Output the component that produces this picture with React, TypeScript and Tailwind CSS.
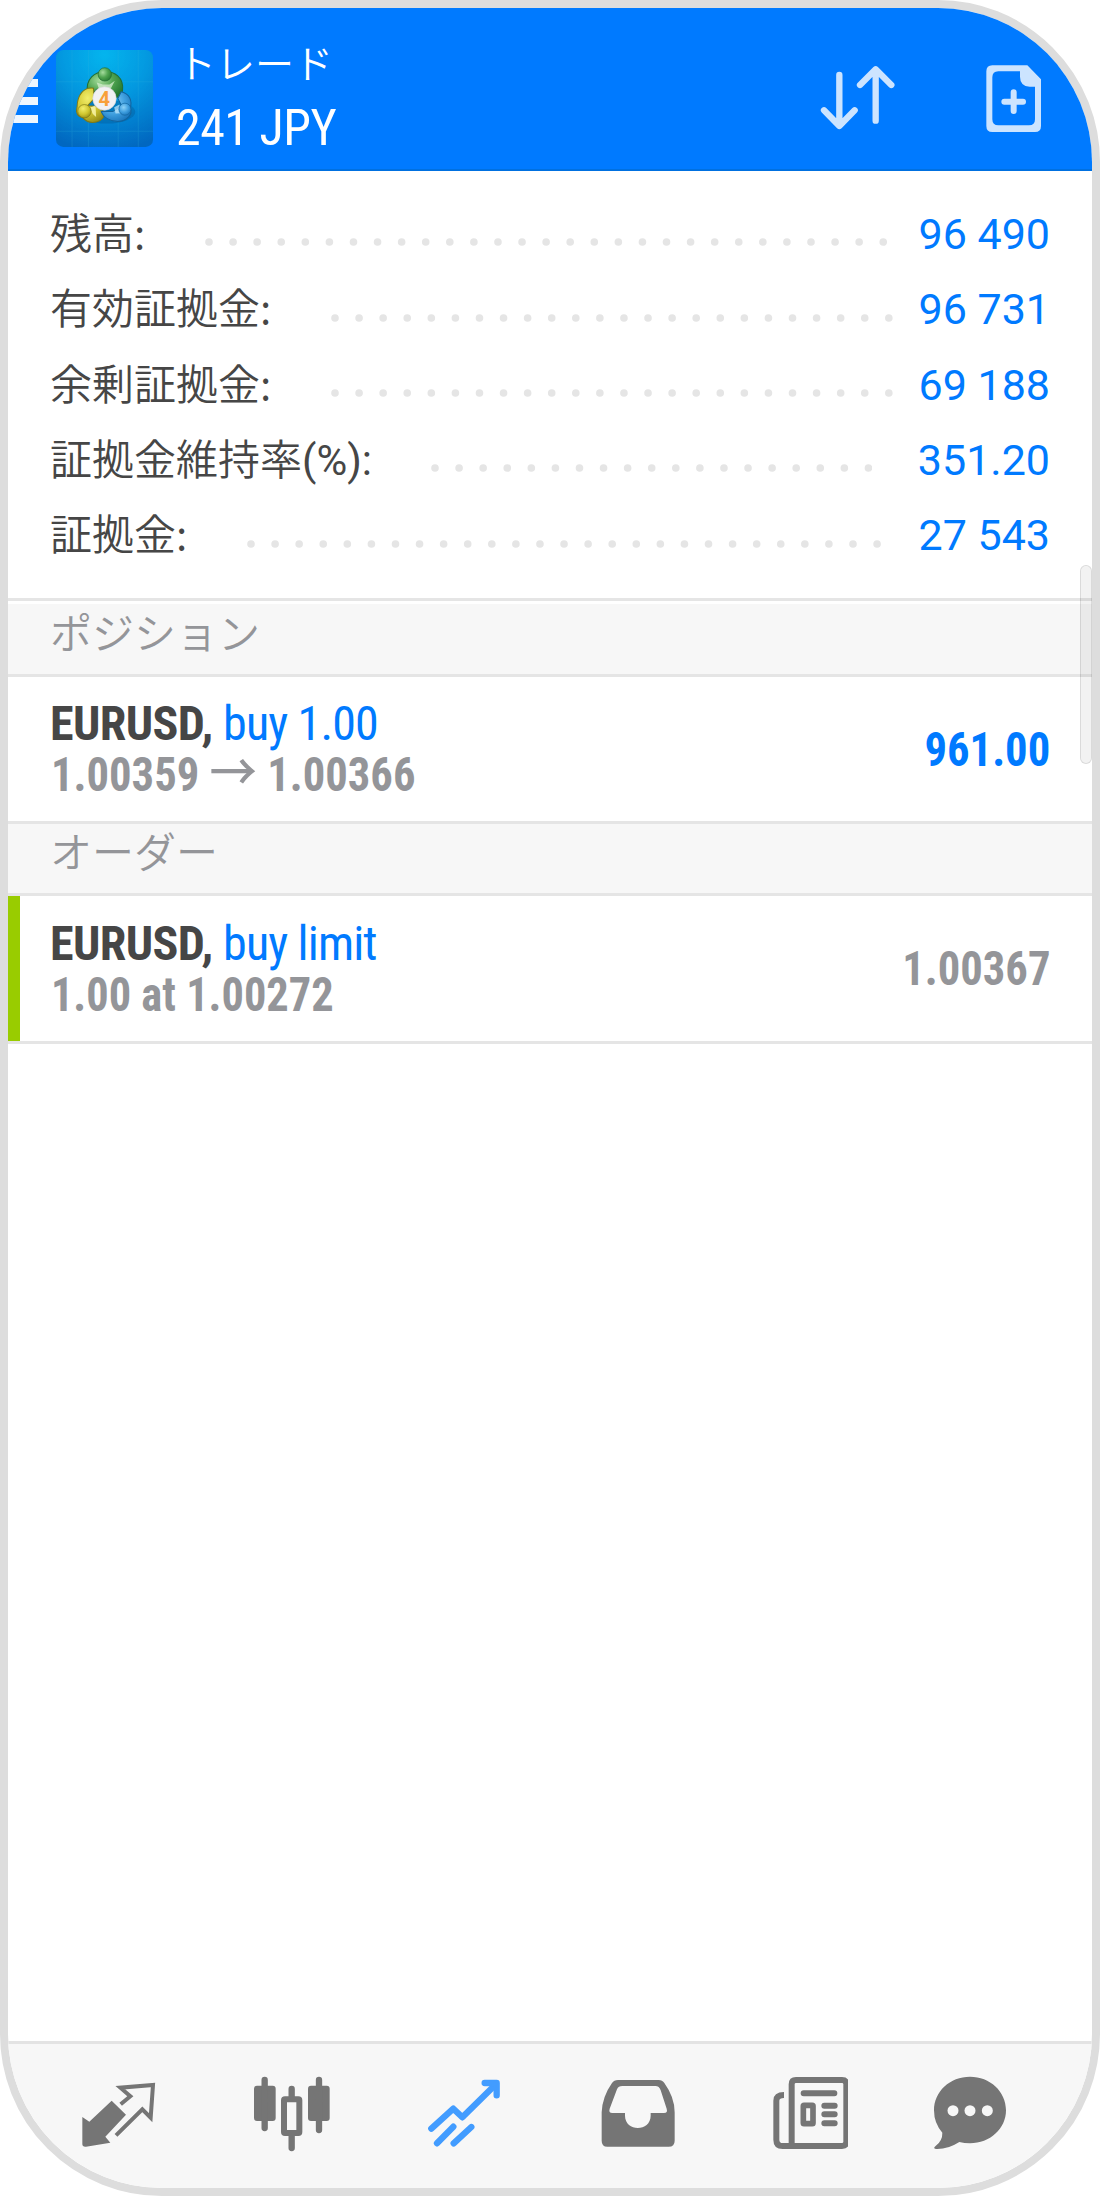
import type { ReactNode } from "react";

const balances = [
    { label: "残高:", value: "96 490", dots: 29, right: "mr-[32px]" },
    { label: "有効証拠金:", value: "96 731", dots: 24, right: "mr-[26px]" },
    { label: "余剰証拠金:", value: "69 188", dots: 24, right: "mr-[26px]" },
    { label: "証拠金維持率", suffix: "(%):", value: "351.20", dots: 19, right: "mr-[47px]" },
    { label: "証拠金:", value: "27 543", dots: 27, right: "mr-[38px]" },
];

function DotLeader({ count }: { count: number }) {
    const width = (count - 1) * 24.08 + 8;
    return (
        <svg width={width} height="8" viewBox={`0 0 ${width} 8`} className="mt-[15px] shrink-0" fill="#e5e5e5">
            {Array.from({ length: count }, (_, i) => (
                <circle key={i} cx={4 + i * 24.08} cy="4" r="3.8" />
            ))}
        </svg>
    )
}

function AppLogo() {
    return (
        <svg width="97" height="97" viewBox="18 15 290 290" className="mt-[42px] ml-[18px] shrink-0">
            <defs>
                <radialGradient id="sky" cx="0.5" cy="0.05" r="1">
                    <stop offset="0" stopColor="#05b5ee" />
                    <stop offset="0.45" stopColor="#0499e0" />
                    <stop offset="1" stopColor="#0268c0" />
                </radialGradient>
                <radialGradient id="green" cx="0.35" cy="0.35" r="0.75">
                    <stop offset="0" stopColor="#a5dc9d" />
                    <stop offset="0.5" stopColor="#51a551" />
                    <stop offset="1" stopColor="#23762f" />
                </radialGradient>
                <radialGradient id="yellow" cx="0.4" cy="0.3" r="0.8">
                    <stop offset="0" stopColor="#f2ee6c" />
                    <stop offset="0.55" stopColor="#cfc52e" />
                    <stop offset="1" stopColor="#8d8515" />
                </radialGradient>
                <radialGradient id="blue" cx="0.4" cy="0.35" r="0.8">
                    <stop offset="0" stopColor="#8dd2f7" />
                    <stop offset="0.5" stopColor="#3f9fdf" />
                    <stop offset="1" stopColor="#0f68b0" />
                </radialGradient>
            </defs>
            <rect x="18" y="15" width="290" height="290" rx="22" fill="url(#sky)" />
            <path d="M115 15v290M204 15v290M264 15v290M66 15v290M18 110h290M18 258h290" stroke="#35b6dc" strokeWidth="2" opacity="0.3" />
            <ellipse cx="170" cy="200" rx="85" ry="35" fill="#044c86" opacity="0.3" />
            <path d="M112 142C100 60 226 58 217 136C214 152 206 156 197 157L178 132L140 132L124 149Z" fill="url(#green)" stroke="#226e35" strokeWidth="3" />
            <path d="M130 129C100 125 82 150 81 184C76 202 82 215 98 217C118 242 165 232 163 201L146 184L112 182L132 160Z" fill="url(#yellow)" stroke="#7f7915" strokeWidth="3" />
            <path d="M213 140C240 146 246 170 240 188C249 207 231 227 203 229C180 229 158 216 153 198L188 199L214 181L203 160Z" fill="url(#blue)" stroke="#12649e" strokeWidth="3" />
            <path d="M140 112L158 118H178L194 107L182 130H146Z" fill="#d7efd0" opacity="0.75" />
            <path d="M120 188L136 180L138 215L128 206Z" fill="#fbf8b2" opacity="0.8" />
            <path d="M192 186L208 178L213 204L196 205Z" fill="#c8ecff" opacity="0.7" />
            <circle cx="164" cy="88" r="20" fill="url(#green)" stroke="#226e35" strokeWidth="2" />
            <circle cx="103" cy="198" r="20" fill="url(#yellow)" stroke="#7f7915" strokeWidth="2" />
            <circle cx="224" cy="192" r="18" fill="url(#blue)" stroke="#12649e" strokeWidth="2" />
            <circle cx="163" cy="160" r="35" fill="#f1f1f3" stroke="#d6d6da" strokeWidth="2" />
            <text x="162" y="181" textAnchor="middle" fontFamily="Roboto" fontWeight="700" fontSize="60" fill="#f8a03a">4</text>
        </svg>
    )
}

function SectionTitle({ children, className }: { children: ReactNode, className: string }) {
    return (
        <div className={`box-content border-b-[3px] border-[#e5e5e5] bg-[#f7f7f7] pl-[42px] font-['Noto_Sans_CJK_JP',sans-serif] text-[42px] font-[350] text-[#949599] ${className}`}>
            {children}
        </div>
    )
}

function DealTitle({ symbol, action }: { symbol: string, action: string }) {
    return (
        <div className="tracking-[-0.6px] text-[#464646]">
            {symbol}, <span className="font-normal tracking-[-0.85px] text-[#007aff]">{action}</span>
        </div>
    )
}

function TabIcon({ children, color = "text-[#757575]" }: { children: ReactNode, color?: string }) {
    return (
        <svg width="80" height="80" viewBox="0 0 240 240" className={`shrink-0 ${color}`} fill="currentColor">
            {children}
        </svg>
    )
}

export default function App() {
    return (
        <div className="h-[2196px] w-[1100px] bg-white">
            <div className="relative flex h-full flex-col overflow-hidden rounded-[162px] border-8 border-[#dddddd] bg-white font-['Roboto',sans-serif]">

                <header className="flex h-[163px] shrink-0 items-start border-b-2 border-[#0070e0] bg-[#007aff]">
                    <div className="mt-[71px] flex w-[30px] shrink-0 flex-col gap-[10.5px]">
                        <span className="h-[7.5px] bg-[#eef6fe]" />
                        <span className="h-[7.5px] bg-[#eef6fe]" />
                        <span className="h-[7.5px] bg-[#eef6fe]" />
                    </div>

                    <AppLogo />

                    <div className="ml-[23px] flex grow flex-col pt-[25px] text-white">
                        <div className="pl-px font-['Noto_Sans_CJK_JP',sans-serif] text-[39px] leading-[56px] font-[350]">トレード</div>
                        <div className="font-['Roboto_Condensed',sans-serif] text-[50px] leading-[78px] font-[450] tracking-[-0.5px]">241 JPY</div>
                    </div>

                    <svg width="80" height="80" viewBox="110 180 240 240" className="mt-[52px] shrink-0" fill="none" stroke="#cce4ff" strokeWidth="19" strokeLinecap="round" strokeLinejoin="round">
                        <path d="M177 225V376M131 331L177 378L223 331" />
                        <path d="M286 362V212M239 255L286 208L333 255" />
                    </svg>

                    <svg width="80" height="80" viewBox="600 180 240 240" className="mt-[52px] mr-[32px] ml-[83px] shrink-0">
                        <path fillRule="evenodd" fill="#cce4ff" d="M637 196H742L783 238V378Q783 396 765 396H637Q619 396 619 378V214Q619 196 637 196ZM655 214Q637 214 637 232V358Q637 376 655 376H747Q765 376 765 358V260H749Q720 258 720 230V214Z" />
                        <path d="M673 305H729M701 277V333" stroke="#cce4ff" strokeWidth="18" strokeLinecap="round" />
                    </svg>
                </header>

                <section className="shrink-0 border-b-[3px] border-[#e5e5e5] pt-[26px] pb-[24.3px]">
                    {balances.map((row) => (
                        <div key={row.label} className="flex h-[75.35px] items-baseline pr-[42px] pl-[42px]">
                            <div className="grow font-['Noto_Sans_CJK_JP',sans-serif] text-[42px] leading-[60px] font-[350] text-[#464646]">
                                {row.label}
                                {row.suffix && <span className="font-['Roboto'] font-normal">{row.suffix}</span>}
                            </div>
                            <div className={`flex h-[75px] items-center self-center ${row.right}`}>
                                <DotLeader count={row.dots} />
                            </div>
                            <div className="flex w-[131px] justify-end text-[43px] leading-[75.35px] whitespace-nowrap text-[#007aff]">{row.value}</div>
                        </div>
                    ))}
                </section>

                <SectionTitle className="mt-[3px] h-[70px] leading-[54px]">ポジション</SectionTitle>

                <div className="flex h-[147px] shrink-0 items-center justify-between border-b-[3px] border-[#e5e5e5] pr-[42px] pl-[42px] font-['Roboto_Condensed',sans-serif] text-[48px] leading-[51px] font-bold">
                    <div>
                        <DealTitle symbol="EURUSD" action="buy 1.00" />
                        <div className="flex h-[51px] origin-left scale-x-[0.93] items-baseline pl-px text-[#949599]">
                            1.00359
                            <span className="w-[73px] text-center font-['Noto_Sans_CJK_JP',sans-serif] text-[51px] leading-9 font-medium">→</span>
                            1.00366
                        </div>
                    </div>
                    <div className="origin-right scale-x-[0.93] text-[#007aff]">961.00</div>
                </div>

                <SectionTitle className="h-[69px] leading-[52px]">オーダー</SectionTitle>

                <div className="flex h-[148px] shrink-0 border-b-[3px] border-[#e5e5e5] font-['Roboto_Condensed',sans-serif] text-[48px] leading-[51px] font-bold">
                    <div className="w-3 bg-[#99cc00]" />
                    <div className="flex grow items-center justify-between pr-[42px] pl-[30px] text-[#949599]">
                        <div>
                            <DealTitle symbol="EURUSD" action="buy limit" />
                            <div className="origin-left scale-x-[0.925] pl-px">1.00 at 1.00272</div>
                        </div>
                        <div className="origin-right scale-x-[0.93]">1.00367</div>
                    </div>
                </div>

                <div className="grow" />

                <nav className="flex h-[147px] shrink-0 items-start gap-[92px] border-t-[3px] border-[#e3e3e3] bg-[#f7f7f7] pt-[29px] pl-[72px]">
                    <TabIcon>
                        <g transform="translate(-240 -159)">
                            <path d="M335 242L378 284L316 350L331 368L258 380Q247 381 247 372V291L268 305Z" />
                            <path d="M362 253L391 229L361 203L459 195L452 293L427 268L348 346" fill="none" stroke="currentColor" strokeWidth="12" />
                        </g>
                    </TabIcon>

                    <TabIcon>
                        <g transform="translate(-756 -159)">
                            <rect x="762" y="197" width="65" height="106" rx="9" />
                            <rect x="924" y="197" width="65" height="106" rx="9" />
                            <path d="M794 180V324M957 180V330M875 207V234M875 344V384" stroke="currentColor" strokeWidth="19" strokeLinecap="round" />
                            <rect x="852" y="238" width="46" height="101" rx="3" fill="none" stroke="currentColor" strokeWidth="18" />
                        </g>
                    </TabIcon>

                    <TabIcon color="text-[#429cff]">
                        <g transform="translate(-192 -159)" fill="none" stroke="currentColor" strokeWidth="19" strokeLinecap="round" strokeLinejoin="round">
                            <path d="M214 326L280 266L307 292L406 194" />
                            <path d="M374 189H410V226" />
                            <path d="M231 370L280 320M281 370L334 321" />
                        </g>
                    </TabIcon>

                    <TabIcon>
                        <path transform="translate(-708 -159)" fillRule="evenodd" d="M774 180H896Q907 180 913 189Q944 232 944 277V362Q944 380 926 380H742Q725 380 725 362V277Q727 230 756 189Q762 180 774 180ZM787 198Q775 198 771 208L749 266Q745 279 757 279H795V287C795 336 872 336 872 287V279H912Q924 279 920 266L902 211Q898 198 886 198Z" />
                    </TabIcon>

                    <TabIcon>
                        <g transform="translate(-144 -159)" fill="none" stroke="currentColor" strokeWidth="18" strokeLinecap="round">
                            <path d="M192 225Q169 225 169 242V359Q169 378 188 378H366Q379 378 379 365V193Q379 180 366 180H228Q215 180 215 193V378" strokeLinecap="butt" />
                            <path d="M251 220H343M313 257H344M313 283H344M313 310H344" />
                            <rect x="250" y="256" width="29" height="55" rx="2" strokeWidth="17" />
                        </g>
                    </TabIcon>

                    <div className="-ml-[10px]">
                        <TabIcon>
                            <g transform="translate(-630 -159)">
                                <path d="M750 170C810 170 858 214 858 271C858 326 810 370 750 370Q733 370 718 366Q684 388 649 387Q638 386 646 379Q668 362 667 338Q642 310 642 271C642 214 690 170 750 170Z" />
                                <circle cx="699" cy="272" r="16.5" fill="#f7f7f7" />
                                <circle cx="750" cy="272" r="16.5" fill="#f7f7f7" />
                                <circle cx="802" cy="272" r="16.5" fill="#f7f7f7" />
                            </g>
                        </TabIcon>
                    </div>
                </nav>

                {/* scroll thumb */}
                <div className="absolute top-[557px] right-0 h-[199px] w-3 rounded-[6px] border border-black/10 bg-black/5" />
            </div>
        </div>
    )
}
